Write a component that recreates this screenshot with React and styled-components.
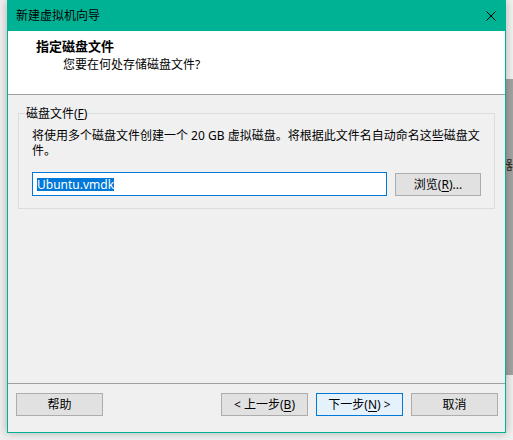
import styled, { createGlobalStyle } from "styled-components";

const GlobalStyle = createGlobalStyle`
  html, body {
    margin: 0;
    padding: 0;
  }
  body {
    width: 513px;
    height: 440px;
    overflow: hidden;
    background: #f0f0f0;
    font-family: "Noto Sans", "Noto Sans CJK SC", sans-serif;
    font-size: 12px;
    color: #000;
  }
`;

const Desktop = styled.div`
  display: flex;
  align-items: flex-start;
  height: 440px;
`;

const LeftGap = styled.div`
  width: 7px;
  height: 440px;
  flex: none;
  background: #efefef;
`;

const RightStrip = styled.div`
  flex: 1;
  height: 440px;
  overflow: hidden;
  display: flex;
  flex-direction: column;
`;

const StripPart = styled.div`
  height: ${(p) => p.$h}px;
  flex: none;
  background: ${(p) => p.$bg};
  display: flex;
  flex-direction: column;
`;

const BackGlyph = styled.div`
  margin-top: 78px;
  margin-left: -6px;
  font-size: 13px;
  line-height: 15px;
  color: #3a2a1a;
  white-space: nowrap;
`;

const Window = styled.div`
  position: relative;
  z-index: 1;
  width: 499px;
  height: 433px;
  flex: none;
  box-sizing: border-box;
  border: 1px solid #00b294;
  border-top: none;
  background: #f0f0f0;
  display: flex;
  flex-direction: column;
  box-shadow: 0 0 9px rgba(0, 0, 0, 0.28);
`;

const TitleBar = styled.div`
  height: 31px;
  flex: none;
  background: #00b294;
  display: flex;
  align-items: center;
  justify-content: space-between;
  padding: 0 9px 0 8px;
`;

const TitleText = styled.div`
  font-size: 12px;
  line-height: 15px;
  color: #000;
`;

const CloseIcon = () => (
  <svg width="10" height="10" viewBox="0 0 10 10">
    <path d="M0.5 0.5 L9.5 9.5 M9.5 0.5 L0.5 9.5" stroke="#000" strokeWidth="1" fill="none" />
  </svg>
);

const Header = styled.div`
  height: 56px;
  flex: none;
  background: #fff;
  border-bottom: 1px solid #a0a0a0;
  padding: 7px 0 0 28px;
  box-sizing: content-box;
`;

const HeaderTitle = styled.div`
  font-size: 13px;
  line-height: 16px;
  font-weight: 700;
`;

const HeaderSub = styled.div`
  margin-top: 3px;
  margin-left: 27px;
  line-height: 15px;
`;

const Body = styled.div`
  flex: 1;
  padding: 11px 10px 0 10px;
`;

const Group = styled.fieldset`
  margin: 0;
  padding: 7px 13px 12px 13px;
  border: 1px solid #dcdcdc;
  min-width: 0;
`;

const GroupLabel = styled.legend`
  margin-left: -7px;
  padding: 0 1px;
  line-height: 15px;
`;

const Description = styled.div`
  line-height: 15px;
`;

const FileRow = styled.div`
  margin-top: 14px;
  display: flex;
  align-items: center;
  gap: 8px;
`;

const TextBox = styled.div`
  flex: 1;
  height: 24px;
  box-sizing: border-box;
  border: 1px solid #0078d7;
  background: #fff;
  padding: 3px 0 0 4px;
`;

const Selected = styled.span`
  display: inline-block;
  background: #0078d7;
  color: #fff;
  font-family: "Noto Sans", sans-serif;
  font-size: 12px;
  line-height: 13px;
  height: 13px;
`;

const Button = styled.div`
  width: ${(p) => p.$w || 87}px;
  height: 23px;
  flex: none;
  box-sizing: border-box;
  border: 1px solid ${(p) => (p.$primary ? "#0078d7" : "#adadad")};
  background: ${(p) => (p.$primary ? "#e5f1fb" : "#e1e1e1")};
  display: flex;
  align-items: center;
  justify-content: center;
  line-height: 15px;
  white-space: nowrap;
  ${(p) => p.$pushRight && "margin-right: auto;"}

  u {
    text-decoration-thickness: 1px;
    text-underline-offset: 2px;
  }
`;

const Footer = styled.div`
  height: 39px;
  flex: none;
  border-top: 1px solid #a0a0a0;
  padding: 9px 7px 0 8px;
  box-sizing: content-box;
  display: flex;
  align-items: flex-start;
  gap: 8px;
`;

export default function App() {
  return (
    <>
      <GlobalStyle />
      <Desktop>
        <LeftGap />
        <Window>
          <TitleBar>
            <TitleText>新建虚拟机向导</TitleText>
            <CloseIcon />
          </TitleBar>
          <Header>
            <HeaderTitle>指定磁盘文件</HeaderTitle>
            <HeaderSub>您要在何处存储磁盘文件?</HeaderSub>
          </Header>
          <Body>
            <Group>
              <GroupLabel>
                磁盘文件(<u>F</u>)
              </GroupLabel>
              <Description>
                将使用多个磁盘文件创建一个 20 GB 虚拟磁盘。将根据此文件名自动命名这些磁盘文件。
              </Description>
              <FileRow>
                <TextBox>
                  <Selected>Ubuntu.vmdk</Selected>
                </TextBox>
                <Button $w={86}>
                  浏览(<u>R</u>)...
                </Button>
              </FileRow>
            </Group>
          </Body>
          <Footer>
            <Button $pushRight>帮助</Button>
            <Button>
              &lt; 上一步(<u>B</u>)
            </Button>
            <Button $primary>
              下一步(<u>N</u>) &gt;
            </Button>
            <Button>取消</Button>
          </Footer>
        </Window>
        <RightStrip>
          <StripPart $h={79} $bg="#f2f2f2" />
          <StripPart $h={296} $bg="#a3a3a3">
            <BackGlyph>器</BackGlyph>
          </StripPart>
          <StripPart $h={65} $bg="#f0f0f0" />
        </RightStrip>
      </Desktop>
    </>
  );
}
